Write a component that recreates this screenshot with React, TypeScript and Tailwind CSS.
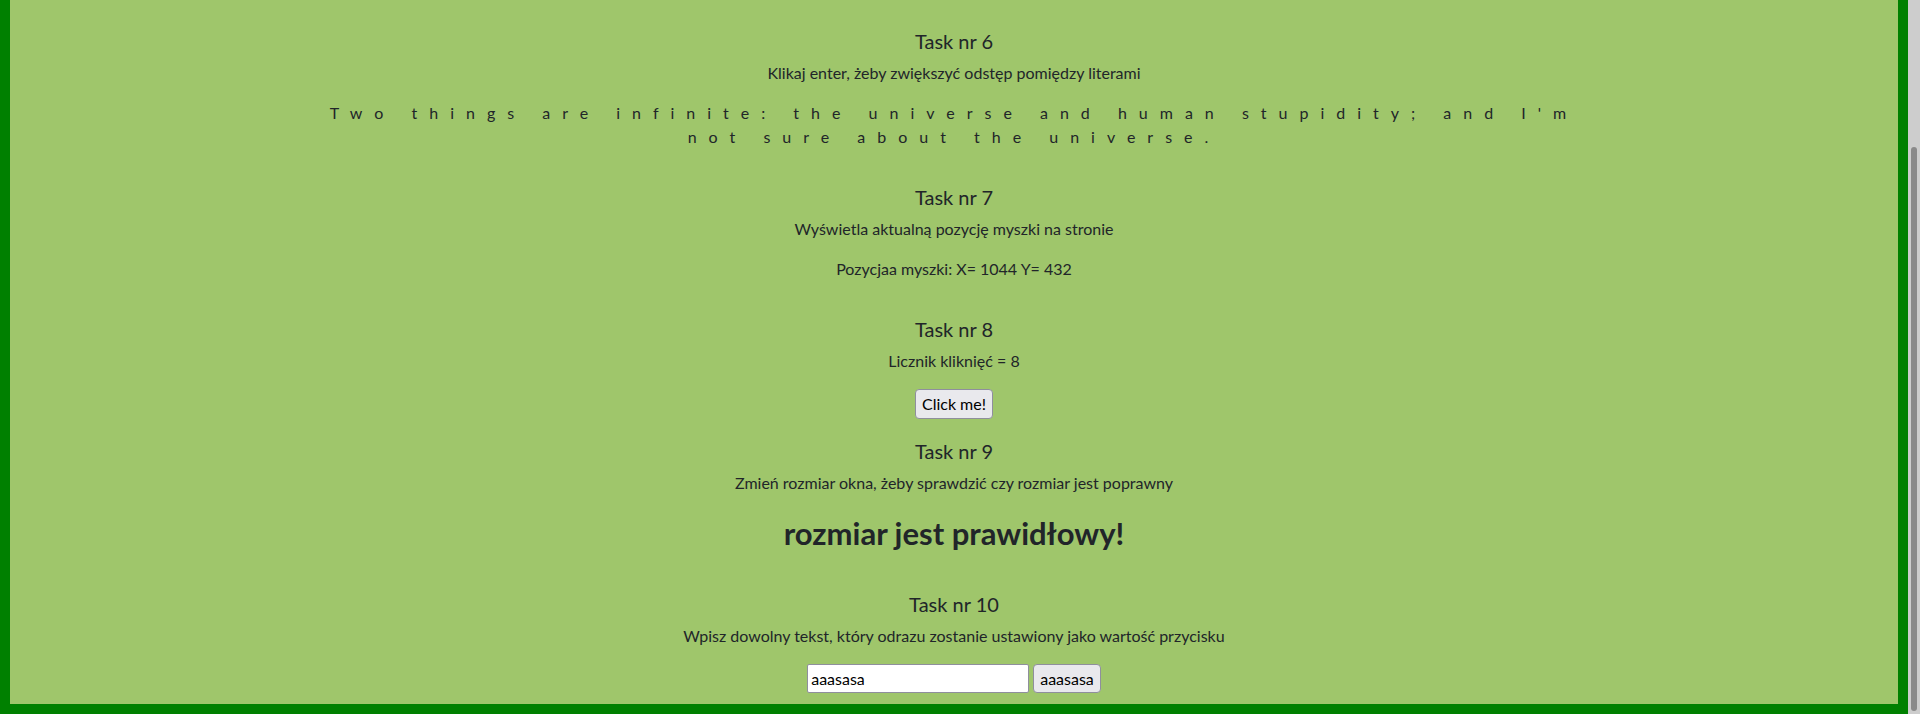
import { useState } from "react";

type TaskProps = {
  nr: number;
  desc: string;
  children?: React.ReactNode;
};

const Task = ({ nr, desc, children }: TaskProps) => (
  <div className="mt-5 flex flex-col items-center text-center">
    <h5 className="mb-2 text-[20px] leading-[24px]">Task nr {nr}</h5>
    <p className="mb-4 text-[16px] leading-6">{desc}</p>
    {children}
  </div>
);

export default function App() {
  const [clicks, setClicks] = useState<number>(8);
  const [text, setText] = useState<string>("aaasasa");

  return (
    <div className="flex h-screen w-full overflow-hidden font-['Lato',sans-serif] text-[#212529]">
      <div className="flex-1 border-x-[10px] border-b-[10px] border-[#008000] bg-[#9fc66b] pt-[9px]">
        <Task nr={6} desc="Klikaj enter, żeby zwiększyć odstęp pomiędzy literami">
          <p className="mb-4 w-[1296px] text-[16px] leading-6 tracking-[12px]">
            Two things are infinite: the universe and human stupidity; and I'm not sure about the universe.
          </p>
        </Task>

        <Task nr={7} desc="Wyświetla aktualną pozycję myszki na stronie">
          <p className="mb-4 leading-6">Pozycjaa myszki: X= 1044 Y= 432</p>
        </Task>

        <Task nr={8} desc={`Licznik kliknięć = ${clicks}`}>
          <button
            onClick={() => setClicks(clicks + 1)}
            className="h-[30px] rounded-[4px] border border-[#8f8f9d] bg-[#e9e9ed] px-[6px] leading-6 text-black"
          >
            Click me!
          </button>
        </Task>

        <Task nr={9} desc="Zmień rozmiar okna, żeby sprawdzić czy rozmiar jest poprawny">
          <h2 className="mb-[20px] mt-[4px] text-[31px] font-bold leading-[37px]">rozmiar jest prawidłowy!</h2>
        </Task>

        <Task nr={10} desc="Wpisz dowolny tekst, który odrazu zostanie ustawiony jako wartość przycisku">
          <div className="flex items-center gap-1">
            <input
              value={text}
              onChange={(e) => setText(e.target.value)}
              className="h-[29px] w-[222px] rounded-[2px] border border-[#8f8f9d] bg-white px-[3px] leading-6 text-black outline-none"
            />
            <button className="h-[29px] rounded-[4px] border border-[#8f8f9d] bg-[#e9e9ed] px-[6px] leading-6 text-black">
              {text}
            </button>
          </div>
        </Task>
      </div>

      <div className="flex w-[12px] flex-col bg-[#cdcdcd] pb-[3px] pt-[147px]">
        <div className="ml-[3px] w-[6px] flex-1 rounded-full bg-[#8a8a8a]" />
      </div>
    </div>
  );
}
